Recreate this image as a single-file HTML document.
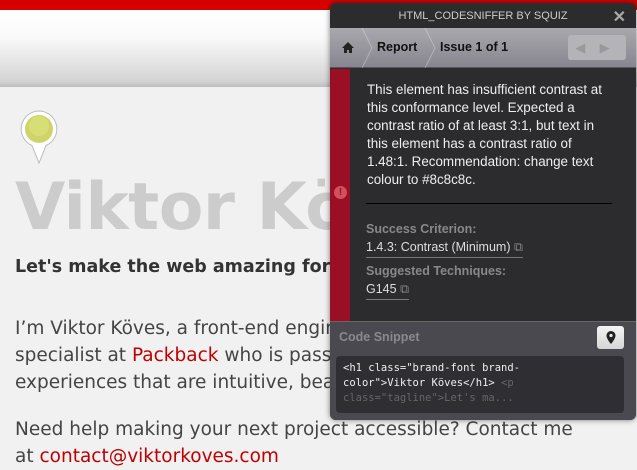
<!DOCTYPE html>
<html><head><meta charset="utf-8"><style>
*{margin:0;padding:0;box-sizing:border-box}
body{width:637px;height:469px;overflow:hidden;background:#f1f1f1;font-family:"DejaVu Sans","Liberation Sans",sans-serif;position:relative}
.top{position:absolute;left:0;top:0;width:637px;height:10px;background:#d60000}
.hdr{position:absolute;left:0;top:10px;width:637px;height:77px;background:linear-gradient(#fff 0%,#fafafa 35%,#d4d4d4 92%,#bdbdbd 100%)}
.t{position:absolute;white-space:nowrap}
.p{position:absolute;left:330px;top:3px;width:306px;height:417px;background:#2c2c2e;border-radius:6px;box-shadow:0 0 6px rgba(0,0,0,.5);overflow:hidden;font-family:"Liberation Sans",sans-serif}
</style></head><body>
<div class="top"></div><div class="hdr"></div>
<svg class="t" style="left:18px;top:108px" width="44" height="58" viewBox="0 0 44 58"><path d="M21 3a18 18 0 0 1 7 34.5L21 55 14 37.5A18 18 0 0 1 21 3z" fill="#fff" stroke="#bbb"/><circle cx="21" cy="21" r="14" fill="#cfd46a"/><circle cx="21" cy="18" r="10" fill="#dde47e" opacity=".6"/></svg>
<div class="t" style="left:15px;top:170px;font-size:65px;color:#cccccc;font-weight:600;letter-spacing:-0.5px;font-family:'DejaVu Sans',sans-serif">Viktor Köves</div>
<div class="t" style="left:15px;top:257px;font-size:17.5px;color:#333;font-weight:600">Let's make the web amazing for everyone</div>
<div class="t" style="left:15px;top:315px;font-size:18.5px;line-height:27px;color:#444">I’m Viktor Köves, a front-end engineer and accessibility<br>specialist at <span style="color:#c00000">Packback</span> who is passionate about creating<br>experiences that are intuitive, beautiful and accessible.</div>
<div class="t" style="left:15px;top:416px;font-size:18.5px;line-height:27px;color:#444">Need help making your next project accessible? Contact me<br>at <span style="color:#c00000">contact@viktorkoves.com</span></div>
<div class="p">
 <div style="height:25px;text-align:center;color:#ccc;font-size:11px;line-height:27px">HTML_CODESNIFFER BY SQUIZ</div>
 <div class="t" style="right:10px;top:4px;color:#aaa;font-size:16px;font-weight:bold">✕</div>
 <div style="position:absolute;top:25px;left:0;width:306px;height:40px;background:linear-gradient(#a9a8ad,#878690);border-bottom:1px solid #555">
  <svg class="t" style="left:11px;top:13px" width="14" height="13" viewBox="0 0 14 13"><path d="M7 1L1 7h2v5h3V9h2v3h3V7h2z" fill="#222"/></svg>
  <svg class="t" style="left:30px;top:0" width="14" height="40"><path d="M2 0L12 20L2 40" fill="none" stroke="rgba(255,255,255,.3)"/></svg>
  <div class="t" style="left:47px;top:12px;font-size:12.5px;font-weight:bold;color:#111">Report</div>
  <svg class="t" style="left:93px;top:0" width="14" height="40"><path d="M2 0L12 20L2 40" fill="none" stroke="rgba(255,255,255,.3)"/></svg>
  <div class="t" style="left:110px;top:12px;font-size:12.5px;font-weight:bold;color:#111">Issue 1 of 1</div>
  <div class="t" style="left:238px;top:7px;width:58px;height:25px;background:#b4b3b8;border-radius:3px;color:#999;font-size:13px;line-height:25px">&nbsp;&nbsp;◀&nbsp;&nbsp;&nbsp;&nbsp;▶</div>
 </div>
 <div style="position:absolute;top:66px;left:0;width:20px;height:252px;background:#9b0f25"></div>
 <div class="t" style="left:4px;top:183px;width:13px;height:13px;border-radius:7px;background:#d2505e;color:#9b0f25;font-size:10px;font-weight:bold;text-align:center;line-height:13px">!</div>
 <div class="t" style="left:37px;top:78px;font-size:13.4px;line-height:18px;color:#eee">This element has insufficient contrast at<br>this conformance level. Expected a<br>contrast ratio of at least 3:1, but text in<br>this element has a contrast ratio of<br>1.48:1. Recommendation: change text<br>colour to #8c8c8c.</div>
 <div class="t" style="left:36px;top:200px;width:246px;height:1px;background:#000"></div>
 <div class="t" style="left:36px;top:219px;font-size:12.5px;font-weight:bold;color:#888">Success Criterion:</div>
 <div class="t" style="left:36px;top:237px;font-size:12.5px;color:#ddd;border-bottom:1px solid #777;padding-bottom:2px">1.4.3: Contrast (Minimum) <span style="color:#888">⧉</span></div>
 <div class="t" style="left:36px;top:261px;font-size:12.5px;font-weight:bold;color:#888">Suggested Techniques:</div>
 <div class="t" style="left:36px;top:279px;font-size:12.5px;color:#ddd;border-bottom:1px solid #777;padding-bottom:2px">G145 <span style="color:#888">⧉</span></div>
 <div style="position:absolute;top:318px;left:0;width:306px;height:99px;background:#4a494f;border-top:1px solid #666"></div>
 <div class="t" style="left:9px;top:327px;font-size:12.5px;font-weight:bold;color:#8a898e">Code Snippet</div>
 <div class="t" style="left:267px;top:323px;width:27px;height:23px;border-radius:3px;background:linear-gradient(#f4f4f4,#d6d6d6);text-align:center"><svg width="10" height="14" viewBox="0 0 10 14" style="margin-top:5px"><path d="M5 0a4.5 4.5 0 0 1 4.5 4.5C9.5 8 5 13 5 13S.5 8 .5 4.5A4.5 4.5 0 0 1 5 0z" fill="#222"/><circle cx="5" cy="4.5" r="1.6" fill="#e8e8e8"/></svg></div>
 <div class="t" style="left:6px;top:353px;width:288px;height:57px;background:#2f2e33;border-radius:4px"></div>
 <div class="t" style="left:13px;top:358px;font-family:'DejaVu Sans Mono','Liberation Mono',monospace;font-size:10.5px;line-height:15px;color:#eee">&lt;h1 class="brand-font brand-<br>color"&gt;Viktor Köves&lt;/h1&gt; <span style="color:#666">&lt;p</span><br><span style="color:#666">class="tagline"&gt;Let's ma...</span></div>
</div>
</body></html>
